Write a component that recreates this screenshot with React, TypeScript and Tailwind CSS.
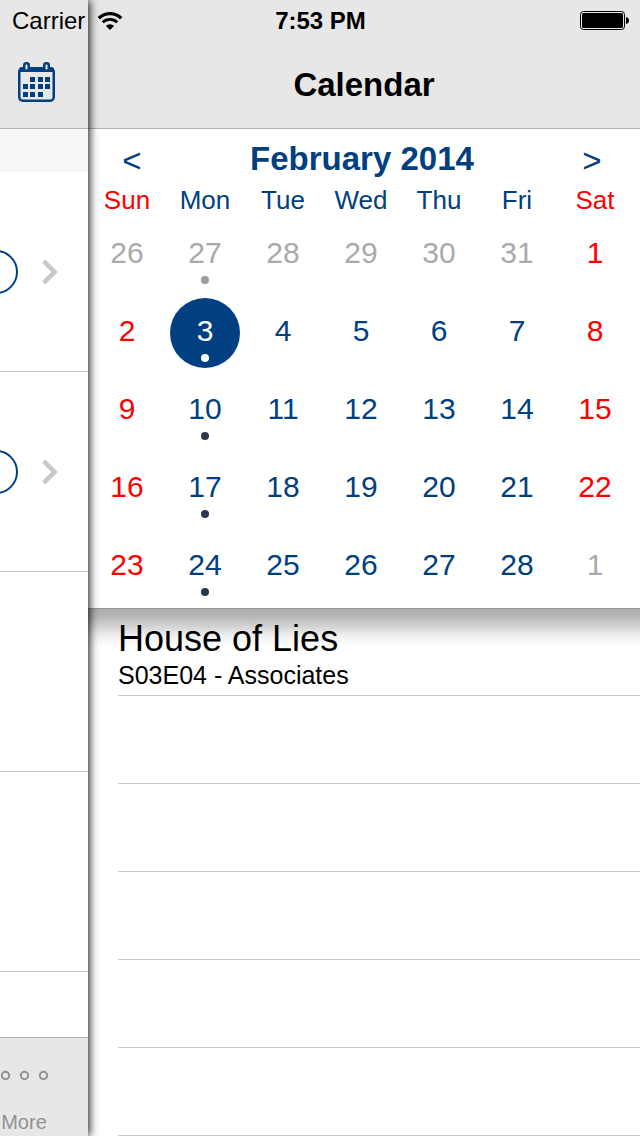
import React, { useState } from "react";

type Day = { n: number; out?: boolean; event?: boolean };

const WEEKDAYS = ["Sun", "Mon", "Tue", "Wed", "Thu", "Fri", "Sat"];

const WEEKS: Day[][] = [
  [
    { n: 26, out: true },
    { n: 27, out: true, event: true },
    { n: 28, out: true },
    { n: 29, out: true },
    { n: 30, out: true },
    { n: 31, out: true },
    { n: 1 },
  ],
  [{ n: 2 }, { n: 3, event: true }, { n: 4 }, { n: 5 }, { n: 6 }, { n: 7 }, { n: 8 }],
  [{ n: 9 }, { n: 10, event: true }, { n: 11 }, { n: 12 }, { n: 13 }, { n: 14 }, { n: 15 }],
  [{ n: 16 }, { n: 17, event: true }, { n: 18 }, { n: 19 }, { n: 20 }, { n: 21 }, { n: 22 }],
  [
    { n: 23 },
    { n: 24, event: true },
    { n: 25 },
    { n: 26 },
    { n: 27 },
    { n: 28 },
    { n: 1, out: true },
  ],
];

function WifiIcon() {
  return (
    <svg width="26" height="18" viewBox="0 0 26 18" fill="none" aria-hidden="true">
      <path d="M1.800 6.200a16 16 0 0 1 22.400 0" stroke="#000" strokeWidth="3.300" />
      <path d="M5.800 10.300a10.300 10.300 0 0 1 14.400 0" stroke="#000" strokeWidth="2.800" />
      <path d="M8.900 14a5.800 5.800 0 0 1 8.200 0L13 18z" fill="#000" />
    </svg>
  );
}

function BatteryIcon() {
  return (
    <svg width="49" height="19" viewBox="0 0 49 19" aria-hidden="true">
      <rect x="0.5" y="0.5" width="44" height="18" rx="3" fill="none" stroke="#000" />
      <rect x="2" y="2" width="41" height="15" rx="1.5" fill="#000" />
      <path d="M46 6c2 .3 3 1.700 3 3.500s-1 3.200-3 3.500z" fill="#000" />
    </svg>
  );
}

function CalendarIcon() {
  const cells = [
    [12, 15], [20, 15], [27, 15],
    [5, 22], [12, 22], [20, 22], [27, 22],
    [5, 30], [12, 30], [20, 30],
  ];
  return (
    <svg width="38" height="40" viewBox="0 0 38 40" aria-hidden="true">
      <rect x="1.250" y="6.250" width="34.500" height="32.500" rx="3.500" fill="none" stroke="#004080" strokeWidth="2.500" />
      <path d="M1 10V8a3 3 0 0 1 3-3h29a3 3 0 0 1 3 3v2z" fill="#004080" />
      <rect x="6.250" y="1.250" width="4.500" height="7.500" rx="2" fill="#e7e7e7" stroke="#004080" strokeWidth="2.500" />
      <rect x="26.250" y="1.250" width="4.500" height="7.500" rx="2" fill="#e7e7e7" stroke="#004080" strokeWidth="2.500" />
      {cells.map(([x, y]) => (
        <rect key={`${x}-${y}`} x={x} y={y} width="5" height="5" fill="#004080" />
      ))}
    </svg>
  );
}

function StatusBar() {
  return (
    <div className="absolute inset-x-0 top-0 z-20 flex h-[41px] items-center pr-[11px] pl-3 text-2xl leading-10 text-black">
      <div className="flex flex-1 items-center gap-3">
        <span>Carrier</span>
        <WifiIcon />
      </div>
      <span className="font-bold">7:53 PM</span>
      <div className="flex flex-1 justify-end">
        <BatteryIcon />
      </div>
    </div>
  );
}

function SidePanel() {
  return (
    <aside className="relative z-10 flex w-22 shrink-0 flex-col bg-white shadow-[1px_0_9px_rgba(0,0,0,1)]">
      <header className="flex h-[129px] flex-col border-b border-[#b2b2b2] bg-[#e7e7e7] pt-10">
        <div className="flex flex-1 items-center px-[18px] pb-1">
          <button type="button" aria-label="Calendar">
            <CalendarIcon />
          </button>
        </div>
      </header>
      <div className="h-[43px] bg-[#f6f6f6]" />
      <ul className="flex-1">
        {[true, true, false, false].map((filled, i) => (
          <li
            key={i}
            className="flex h-[200px] items-center justify-end gap-6 overflow-hidden border-b border-[#c8c7cc] pr-[30px]"
          >
            {filled && (
              <>
                <button
                  type="button"
                  aria-label="Mark as watched"
                  className="h-11 w-11 shrink-0 rounded-full border-2 border-[#004080]"
                />
                <svg width="16" height="26" viewBox="0 0 16 26" className="shrink-0" aria-hidden="true">
                  <path d="M1.800 2.200 12.600 13 1.800 23.800" fill="none" stroke="#c7c7cc" strokeWidth="4.600" />
                </svg>
              </>
            )}
          </li>
        ))}
      </ul>
      <nav className="h-[99px] border-t border-[#b2b2b2] bg-[#e7e7e7]">
        <button
          type="button"
          className="flex h-full w-12 flex-col items-center justify-between pt-8 text-xl leading-7 text-[#929292]"
        >
          <svg width="48" height="12" viewBox="0 0 48 12" fill="none" stroke="#929292" strokeWidth="2" aria-hidden="true">
            <circle cx="5.500" cy="5.500" r="3.700" />
            <circle cx="24.500" cy="5.500" r="3.700" />
            <circle cx="43.500" cy="5.500" r="3.700" />
          </svg>
          <span>More</span>
        </button>
      </nav>
    </aside>
  );
}

function dayColor(day: Day, column: number, selected: boolean) {
  if (selected) return "bg-[#004080] text-white";
  if (day.out) return "text-[#aaaaaa]";
  return column === 0 || column === 6 ? "text-[#ff0000]" : "text-[#004080]";
}

function dotColor(day: Day, selected: boolean) {
  if (!day.event) return "";
  if (selected) return "bg-white";
  return day.out ? "bg-[#9a9ca5]" : "bg-[#2b384c]";
}

function MonthCalendar() {
  const [selected, setSelected] = useState("1-1");
  return (
    <section className="border-b border-[#97979b] bg-white pb-0.5 text-[#004080]">
      <div className="flex h-14 items-center justify-between pt-1 pr-7 pl-6">
        <button type="button" aria-label="Previous month" className="w-10 pt-1 text-[33px] leading-10">
          &lt;
        </button>
        <h2 className="text-[33px] leading-10 font-bold">February 2014</h2>
        <button type="button" aria-label="Next month" className="w-10 pt-1 text-[33px] leading-10">
          &gt;
        </button>
      </div>
      <div className="pr-1.5">
        <table className="w-full table-fixed border-collapse">
          <thead>
            <tr>
              {WEEKDAYS.map((name, c) => (
                <th
                  key={name}
                  scope="col"
                  className={`h-[31px] p-0 align-top text-[26px] leading-[30px] font-normal ${
                    c === 0 || c === 6 ? "text-[#ff0000]" : "text-[#004080]"
                  }`}
                >
                  {name}
                </th>
              ))}
            </tr>
          </thead>
          <tbody>
            {WEEKS.map((week, r) => (
              <tr key={r}>
                {week.map((day, c) => {
                  const key = `${r}-${c}`;
                  const on = key === selected;
                  return (
                    <td key={key} className="h-[78px] p-0">
                      <button
                        type="button"
                        aria-pressed={on}
                        onClick={() => setSelected(key)}
                        className={`mx-auto flex h-[70px] w-[70px] flex-col items-center gap-[5px] rounded-full pt-[15px] text-3xl leading-9 ${dayColor(day, c, on)}`}
                      >
                        <span>{day.n}</span>
                        <span className={`h-2 w-2 rounded-full ${dotColor(day, on)}`} />
                      </button>
                    </td>
                  );
                })}
              </tr>
            ))}
          </tbody>
        </table>
      </div>
    </section>
  );
}

export default function App() {
  return (
    <div className="relative flex min-h-screen overflow-hidden bg-white font-['Liberation_Sans',Arial,sans-serif]">
      <StatusBar />
      <SidePanel />
      <main className="min-w-0 flex-1 overflow-hidden">
        <header className="h-[129px] border-b border-[#b2b2b2] bg-[#e7e7e7] pt-10">
          <h1 className="text-center text-[33px] leading-[90px] font-bold text-black">Calendar</h1>
        </header>
        <MonthCalendar />
        <ul className="bg-[linear-gradient(to_bottom,#acacac_0px,#b8b8b8_8px,#d2d2d2_17px,#f0f0f0_27px,#ffffff_37px)] pl-[30px] text-black">
          <li className="h-[87px] border-b border-[#c8c7cc] pt-2">
            <h3 className="text-4xl leading-11">House of Lies</h3>
            <p className="text-[25px] leading-7">S03E04 - Associates</p>
          </li>
          {[0, 1, 2, 3, 4].map((i) => (
            <li key={i} className="h-[88px] border-b border-[#c8c7cc]" />
          ))}
        </ul>
      </main>
    </div>
  );
}
